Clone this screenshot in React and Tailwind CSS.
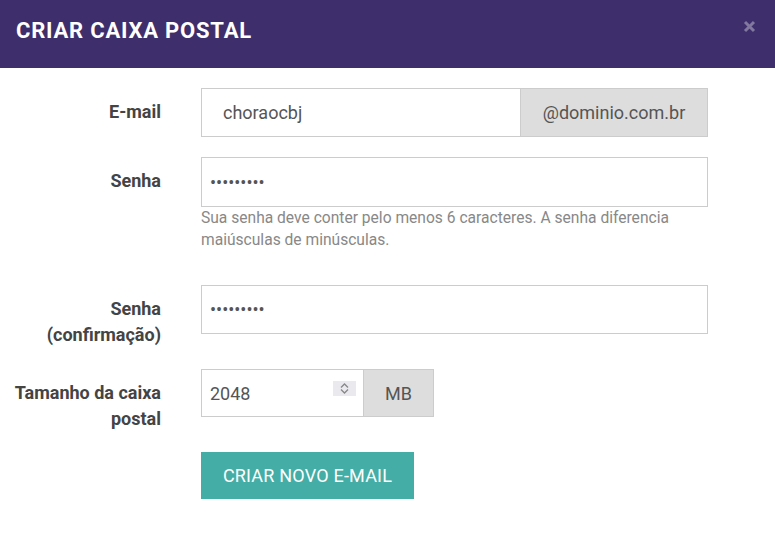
function Label({ children }) {
  return (
    <label className="w-[161px] shrink-0 pt-[11px] text-right text-[18px] font-bold leading-[26px] text-[#444]">
      {children}
    </label>
  )
}

export default function App() {
  return (
    <div className="h-[533px] w-[775px] bg-white font-['Roboto',sans-serif]">
      <div className="flex h-[68px] justify-between bg-[#3e2e6c] pl-4 pr-[19px]">
        <h2 className="mt-[21px] text-[22px] font-bold uppercase leading-[20px] tracking-[0.8px] text-white">
          Criar caixa postal
        </h2>
        <button className="mt-[20px] h-[13px] w-[13px] text-white/35">
          <svg viewBox="0 0 13 13" className="h-[13px] w-[13px]">
            <path d="M2 2 L11 11 M11 2 L2 11" stroke="currentColor" strokeWidth="3" />
          </svg>
        </button>
      </div>

      <div className="pt-[20px]">
        <div className="flex items-start">
          <Label>E-mail</Label>
          <div className="ml-[40px] flex h-[49px] w-[507px]">
            <input
              readOnly
              value="choraocbj"
              className="h-full w-[320px] border border-[#cccccc] px-[21px] text-[18px] text-[#555] outline-none"
            />
            <span className="flex h-full flex-1 items-center justify-center border border-l-0 border-[#cccccc] bg-[#dddddd] text-[18px] text-[#555]">
              @dominio.com.br
            </span>
          </div>
        </div>

        <div className="mt-[20px] flex items-start">
          <Label>Senha</Label>
          <div className="ml-[40px] w-[507px]">
            <input
              readOnly
              type="password"
              value="123456789"
              className="h-[50px] w-full border border-[#cccccc] px-[8px] text-[18px] text-[#555] outline-none"
            />
            <p className="text-[15.6px] leading-[22px] text-[#888]">
              Sua senha deve conter pelo menos 6 caracteres. A senha diferencia maiúsculas de minúsculas.
            </p>
          </div>
        </div>

        <div className="mt-[34px] flex items-start">
          <Label>Senha (confirmação)</Label>
          <div className="ml-[40px] w-[507px]">
            <input
              readOnly
              type="password"
              value="123456789"
              className="h-[49px] w-full border border-[#cccccc] px-[8px] text-[18px] text-[#555] outline-none"
            />
          </div>
        </div>

        <div className="mt-[21px] flex items-start">
          <Label>Tamanho da caixa postal</Label>
          <div className="ml-[40px] flex h-[48px]">
            <div className="relative flex h-full w-[163px] items-center border border-[#cccccc] pl-[8px]">
              <span className="text-[18px] text-[#555]">2048</span>
              <span className="absolute left-[131px] top-[11px] h-[15px] w-[23px] bg-[#e9e9ee]">
                <svg viewBox="0 0 23 15" className="h-[15px] w-[23px]" fill="none" stroke="#888" strokeWidth="1.3">
                  <path d="M8 6.5 L11.5 3 L15 6.5" />
                  <path d="M8 8.5 L11.5 12 L15 8.5" />
                </svg>
              </span>
            </div>
            <span className="flex h-full w-[70px] items-center justify-center border border-l-0 border-[#cccccc] bg-[#dddddd] text-[18px] text-[#555]">
              MB
            </span>
          </div>
        </div>

        <div className="mt-[20px] pl-[201px]">
          <button className="h-[47px] w-[213px] bg-[#43ada6] text-[18px] font-normal uppercase tracking-[0.2px] text-white">
            Criar novo e-mail
          </button>
        </div>
      </div>
    </div>
  )
}
